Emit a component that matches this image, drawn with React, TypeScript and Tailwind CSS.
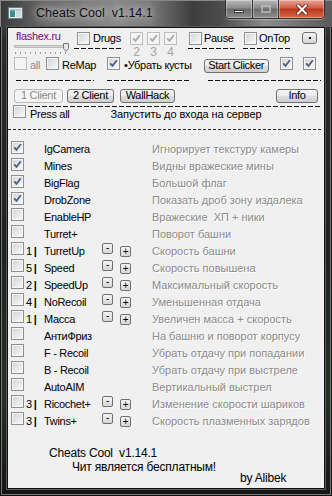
import React from 'react';

const Check = ({ on = false, off = false }: { on?: boolean; off?: boolean }) => (
  <span
    className={`inline-flex w-[13px] h-[13px] shrink-0 items-center justify-center border ${
      off
        ? 'border-[#bdbdbd] bg-[#f4f4f4]'
        : 'border-[#8e8f8f] bg-[linear-gradient(135deg,#cfd2d6,#fbfbfb)] shadow-[inset_0_0_0_1px_#f6f6f6]'
    }`}
  >
    {on && (
      <svg width="11" height="11" viewBox="0 0 11 11">
        <path d="M2.2 5.4 L4.5 7.9 L8.8 2.2" fill="none" stroke={off ? '#a8a8a8' : '#4b5d8a'} strokeWidth="1.8" />
      </svg>
    )}
  </span>
);

const Btn = ({ children, w, off = false }: { children: React.ReactNode; w: string; off?: boolean }) => (
  <span
    className={`inline-flex h-[14px] items-center justify-center rounded-[3px] border text-[11px] leading-none tracking-[-0.3px] ${w} ${
      off
        ? 'border-[#b5b9bc] bg-[#f4f4f4] text-[#8a8a8a]'
        : 'border-[#707070] bg-[linear-gradient(#f4f4f4_0%,#ebebeb_50%,#dddddd_51%,#d0d0d0_100%)] text-black'
    }`}
  >
    {children}
  </span>
);

const Mini = ({ t }: { t: string }) => (
  <span className="inline-flex w-[11px] h-[11px] shrink-0 items-center justify-center rounded-[2px] border border-[#707070] bg-[linear-gradient(#f4f4f4,#d6d6d6)] text-[10px] leading-none text-black">
    {t}
  </span>
);

const Dash = ({ w }: { w: string }) => (
  <div className={`h-px ${w} bg-[repeating-linear-gradient(90deg,#111_0_5px,transparent_5px_7px)]`} />
);

const rows: { on: boolean; n?: string; name: string; pm?: boolean; d: string }[] = [
  { on: true, name: 'IgCamera', d: 'Игнорирует текстуру камеры' },
  { on: true, name: 'Mines', d: 'Видны вражеские мины' },
  { on: true, name: 'BigFlag', d: 'Большой флаг' },
  { on: true, name: 'DrobZone', d: 'Показать дроб зону издалека' },
  { on: false, name: 'EnableHP', d: 'Вражеские  ХП + ники' },
  { on: false, name: 'Turret+', d: 'Поворот башни' },
  { on: false, n: '1', name: 'TurretUp', pm: true, d: 'Скорость башни' },
  { on: false, n: '5', name: 'Speed', pm: true, d: 'Скорость повышена' },
  { on: false, n: '2', name: 'SpeedUp', pm: true, d: 'Максимальный скорость' },
  { on: false, n: '4', name: 'NoRecoil', pm: true, d: 'Уменьшенная отдача' },
  { on: false, n: '1', name: 'Масса', pm: true, d: 'Увеличен масса + скорость' },
  { on: false, name: 'АнтиФриз', d: 'На башню и поворот корпусу' },
  { on: false, name: 'F - Recoil', d: 'Убрать отдачу при попадании' },
  { on: false, name: 'B - Recoil', d: 'Убрать отдачу при выстреле' },
  { on: false, name: 'AutoAIM', d: 'Вертикальный выстрел' },
  { on: false, n: '3', name: 'Ricochet+', pm: true, d: 'Изменение скорости шариков' },
  { on: false, n: '3', name: 'Twins+', pm: true, d: 'Скорость плазменных зарядов' },
];

export default function App() {
  return (
    <div className="w-[332px] h-[496px] overflow-hidden bg-[linear-gradient(180deg,#555_0%,#2a2a2a_8%,#1f2320_50%,#263026_80%,#151515_100%)] font-['Liberation_Sans',Arial,sans-serif] text-black shadow-[inset_0_0_0_1px_#111,inset_0_0_0_2px_#777]">
      {/* title bar */}
      <div className="flex h-[27px] items-start bg-[linear-gradient(90deg,#3a3a3a_0%,#6c6c6c_15%,#8a8a8a_35%,#7a7a7a_45%,#3e3e3e_58%,#4a4a4a_66%,#8c8c8c_80%,#5a5a5a_100%)] shadow-[inset_1px_1px_0_#888]">
        <svg className="ml-[8px] mt-[7px]" width="15" height="12" viewBox="0 0 15 12">
          <rect x="0.5" y="0.5" width="14" height="11" fill="#e8ecef" stroke="#6b7a80" />
          <rect x="2" y="2" width="5" height="8" fill="#3f8f86" />
          <rect x="8" y="2" width="5" height="8" fill="#cfd8dc" />
          <rect x="2" y="2" width="11" height="1.5" fill="#a9c4cc" />
        </svg>
        <span className="ml-[13px] mt-[6px] whitespace-pre text-[12.5px] leading-[15px] text-[#111] [text-shadow:0_0_6px_#d8d8d8,0_0_10px_#cfcfcf]">
          Cheats Cool  v1.14.1
        </span>
        <div className="ml-auto mr-[7px] flex h-[19px] overflow-hidden rounded-b-[5px] border border-t-0 border-[#2b2b2b] shadow-[0_1px_0_rgba(255,255,255,0.35)]">
          <div className="flex w-[27px] items-end justify-center border-r border-[#333] bg-[linear-gradient(#b9b9b9,#8a8a8a_45%,#6a6a6a_50%,#8d8d8d)] pb-[5px] shadow-[inset_0_0_0_1px_rgba(255,255,255,0.35)]">
            <span className="block h-[3px] w-[10px] border border-[#333] bg-white" />
          </div>
          <div className="flex w-[26px] items-center justify-center border-r border-[#333] bg-[linear-gradient(#b9b9b9,#8a8a8a_45%,#6a6a6a_50%,#8d8d8d)] shadow-[inset_0_0_0_1px_rgba(255,255,255,0.35)]">
            <span className="block h-[8px] w-[10px] border-2 border-[#c8c8c8] opacity-60" />
          </div>
          <div className="flex w-[45px] items-center justify-center bg-[linear-gradient(#e6a99c,#cf5a42_45%,#b8341c_50%,#d86a48)] shadow-[inset_0_0_0_1px_rgba(255,220,210,0.45)]">
            <svg width="12" height="11" viewBox="0 0 12 11">
              <path d="M2 1.5 L10 9.5 M10 1.5 L2 9.5" stroke="#5a1a10" strokeWidth="3.6" strokeLinecap="square" />
              <path d="M2 1.5 L10 9.5 M10 1.5 L2 9.5" stroke="#fff" strokeWidth="2" strokeLinecap="square" />
            </svg>
          </div>
        </div>
      </div>

      {/* client */}
      <div className="mx-[7px] flex h-[462px] w-[318px] flex-col border border-[#101010] bg-[#f0f0f0] text-[11px] tracking-[-0.3px] shadow-[0_0_0_1px_#5a5a5a]">
        {/* row 1 */}
        <div className="flex h-[29px] items-start">
          <div className="ml-[6px] flex w-[56px] flex-col">
            <span className="mt-[2px] pl-[2px] text-[11px] leading-[13px] text-[#800080]">flashex.ru</span>
            <svg width="56" height="12" viewBox="0 0 56 12">
              <rect x="0" y="2.5" width="54" height="2" fill="#d6d6d6" stroke="#a0a0a0" strokeWidth="0.6" />
              <path d="M49.5 0.5 h5 v5 l-2.5 3 l-2.5 -3 z" fill="#e6e6e6" stroke="#7a7a7a" />
              {[1, 6, 11, 16, 21, 26, 31, 36, 41, 46, 51].map((x) => (
                <rect key={x} x={x} y="9" width="1" height="2" fill="#9a9a9a" />
              ))}
            </svg>
          </div>
          <div className="ml-[4px] flex w-[48px] flex-col">
            <div className="mt-[4px] flex items-center pl-[3px]">
              <Check />
              <span className="ml-[3px] leading-[13px]">Drugs</span>
            </div>
            <div className="mt-[3px]">
              <Dash w="w-[48px]" />
            </div>
          </div>
          <div className="ml-[8px] mt-[4px] flex gap-[4px]">
            {['2', '3', '4'].map((d) => (
              <div key={d} className="flex w-[13px] flex-col items-center">
                <Check on off />
                <span className="mt-[1px] text-[12px] leading-[12px] text-[#a3a3a3]">{d}</span>
              </div>
            ))}
          </div>
          <div className="ml-[11px] flex w-[47px] flex-col">
            <div className="mt-[4px] flex items-center pl-[1px]">
              <Check />
              <span className="ml-[2px] leading-[13px]">Pause</span>
            </div>
            <div className="mt-[3px]">
              <Dash w="w-[47px]" />
            </div>
          </div>
          <div className="ml-[8px] flex w-[48px] flex-col">
            <div className="mt-[4px] flex items-center pl-[1px]">
              <Check />
              <span className="ml-[2px] leading-[13px]">OnTop</span>
            </div>
            <div className="mt-[3px]">
              <Dash w="w-[48px]" />
            </div>
          </div>
          <span className="ml-[11px] mt-[4px] flex h-[12px] w-[15px] items-center justify-center rounded-[3px] border border-[#707070] bg-[linear-gradient(#f4f4f4,#d4d4d4)]">
            <span className="block h-[2px] w-[2px] bg-black" />
          </span>
        </div>

        {/* row 2 */}
        <div className="mt-[1px] flex h-[15px] items-center">
          <span className="ml-[6px]">
            <Check off />
          </span>
          <span className="ml-[3px] text-[#8a8a8a]">all</span>
          <span className="ml-[6px]">
            <Check />
          </span>
          <span className="ml-[3px]">ReMap</span>
          <span className="ml-[11px]">
            <Check on />
          </span>
          <span className="ml-[4px]">•Убрать кусты</span>
          <span className="ml-[12px]">
            <Btn w="w-[65px]">Start Clicker</Btn>
          </span>
          <span className="ml-[11px]">
            <Check on />
          </span>
          <span className="ml-[10px]">
            <Check on />
          </span>
        </div>
        <div className="mt-[7px] flex">
          <div className="ml-[8px]">
            <Dash w="w-[78px]" />
          </div>
          <div className="ml-[13px]">
            <Dash w="w-[84px]" />
          </div>
          <div className="ml-[17px]">
            <Dash w="w-[113px]" />
          </div>
        </div>

        {/* row 3 */}
        <div className="mt-[6px] flex items-center">
          <span className="ml-[6px]">
            <Btn w="w-[49px]" off>
              1 Client
            </Btn>
          </span>
          <span className="ml-[4px]">
            <Btn w="w-[47px]">2 Client</Btn>
          </span>
          <span className="ml-[6px]">
            <Btn w="w-[55px]">WallHack</Btn>
          </span>
          <span className="ml-auto mr-[6px]">
            <Btn w="w-[42px]">Info</Btn>
          </span>
        </div>
        <div className="ml-[6px] mt-[2px]">
          <Dash w="w-[308px]" />
        </div>

        {/* row 4 */}
        <div className="mt-[1px] flex h-[13px] items-center">
          <span className="ml-[5px]">
            <Check />
          </span>
          <span className="ml-[4px]">Press all</span>
          <span className="ml-[41px] tracking-[-0.1px]">Запустить до входа на сервер</span>
        </div>
        <div className="mt-[8px]">
          <div className="h-px w-[314px] bg-[repeating-linear-gradient(90deg,#222_0_3px,transparent_3px_5px)]" />
        </div>

        {/* list */}
        <div className="mt-[11px] flex flex-col">
          {rows.map((r, i) => (
            <div key={i} className="flex h-[17px] items-center">
              <span className="ml-[3px]">
                <Check on={r.on} />
              </span>
              <span className="ml-[2px] w-[18px] whitespace-pre">
                {r.n ? (
                  <>
                    {r.n}
                    <span className="ml-[2px] font-bold">|</span>
                  </>
                ) : null}
              </span>
              <span className="w-[58px] whitespace-nowrap">{r.name}</span>
              <span className="flex w-[50px]">
                {r.pm && (
                  <>
                    <Mini t="-" />
                    <span className="ml-[7px]">
                      <Mini t="+" />
                    </span>
                  </>
                )}
              </span>
              <span className="whitespace-pre tracking-[0px] text-[#8b8b8b] [text-shadow:1px_1px_0_#fff]">{r.d}</span>
            </div>
          ))}
        </div>

        {/* footer */}
        <div className="mt-[15px] flex flex-col text-[12px] tracking-[-0.2px]">
          <span className="ml-[41px] whitespace-pre leading-[16px]">Cheats Cool  v1.14.1</span>
          <span className="ml-[64px] leading-[12px]">Чит является бесплатным!</span>
          <span className="ml-[232px] leading-[10px]">by Alibek</span>
        </div>
      </div>
    </div>
  );
}
